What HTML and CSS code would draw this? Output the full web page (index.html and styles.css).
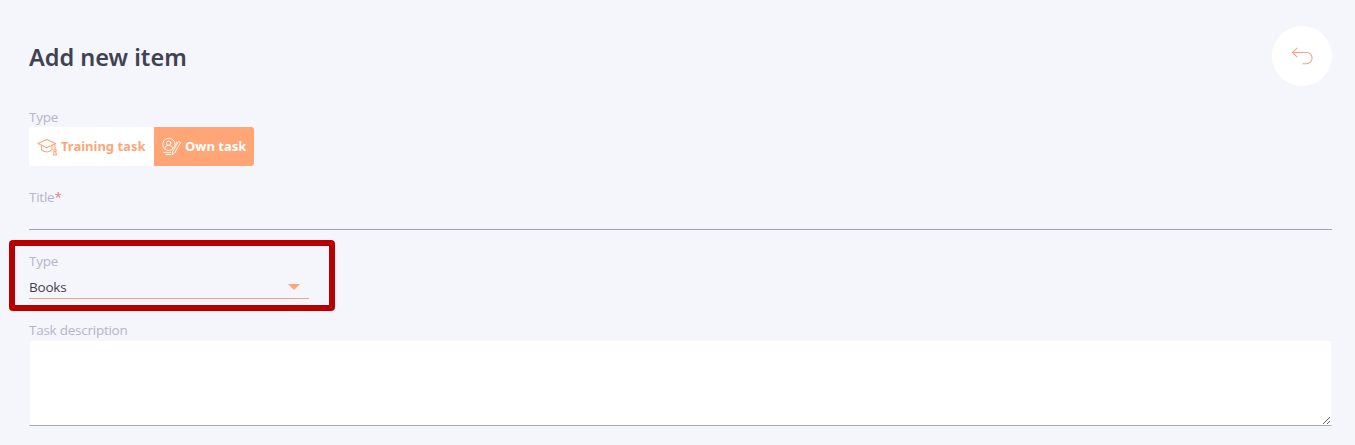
FILE: index.html
```
<!DOCTYPE html>
<html lang="en">
<head>
    <meta charset="UTF-8">
    <meta name="viewport" content="width=device-width, initial-scale=1.0">
    <title>Add new item</title>
    <link rel="stylesheet" href="styles.css">
</head>
<body>
    <div class="container">
        <header class="page-header">
            <h1>Add new item</h1>
            <button type="button" class="back-button" aria-label="Back">
                <svg width="22" height="18" viewBox="0 0 22 18" fill="none" stroke="currentColor" stroke-width="1.1">
                    <path d="M6.200 .8 1.500 5.500l4.700 4.700M1.500 5.500h14a5.600 5.600 0 0 1 0 11.200H11.500"/>
                </svg>
            </button>
        </header>

        <div class="type-group">
            <span class="label">Type</span>
            <div class="type-buttons">
                <button type="button" class="type-button training">
                    <svg width="21" height="19" viewBox="0 0 21 19" fill="none" stroke="currentColor" stroke-width="1.1" stroke-linejoin="round">
                        <path d="M1 6.500 9.800 2.500l8.700 4-8.700 4.200z"/>
                        <path d="M4.500 8.300v4.400c2.500 3 8 3 10.500 0V8.300M18 6.500v6"/>
                        <circle cx="18" cy="13.400" r="1.200"/>
                        <path d="m17.300 14.400-.8 3.600h3l-.8-3.600"/>
                    </svg>
                    <span>Training task</span>
                </button>
                <button type="button" class="type-button own active">
                    <svg width="21" height="19" viewBox="0 0 21 19" fill="none" stroke="currentColor" stroke-width=".9" stroke-linejoin="round" stroke-linecap="round">
                        <path d="M10.500 13a6.200 6.200 0 1 1 3.600-5.500"/>
                        <circle cx="7.700" cy="6.200" r="2.200"/>
                        <path d="M4 12v-1c0-3.500 7.400-3.500 7.400 0v1"/>
                        <path d="m18 4.500 1.700 1L13.500 16l-2.500 2 .5-3z"/>
                        <path d="m15.700 5.300-4 7M2.500 15.400h7M5 17.500h4.500"/>
                    </svg>
                    <span>Own task</span>
                </button>
            </div>
        </div>

        <div class="title-group">
            <label class="label" for="title">Title<span class="required">*</span></label>
            <input type="text" id="title" class="title-input">
        </div>

        <div class="select-group">
            <span class="label">Type</span>
            <div class="select">
                <span>Books</span>
                <svg width="12" height="6" viewBox="0 0 12 6" fill="currentColor"><path d="M0 0h12L6 6z"/></svg>
            </div>
        </div>

        <div class="description-group">
            <label class="label" for="description">Task description</label>
            <textarea id="description" class="description"></textarea>
        </div>
    </div>
</body>
</html>
```
FILE: styles.css
```
* {
    box-sizing: border-box;
}
body {
    margin: 0;
    font-family: "Segoe UI", "Open Sans", "Noto Sans", sans-serif;
    font-size: 14px;
    background-color: #f4f6fb;
    color: #3f4254;
}
.container {
    padding: 26px 23px 0 29px;
}
.page-header {
    display: flex;
    justify-content: space-between;
    align-items: flex-start;
    height: 82px;
}
h1 {
    margin: 15px 0 0;
    font-family: "Segoe UI", "Noto Sans", sans-serif;
    font-size: 23.5px;
    line-height: 32px;
    font-weight: 600;
}
.back-button {
    display: flex;
    align-items: center;
    justify-content: center;
    width: 60px;
    height: 60px;
    padding: 0;
    border: none;
    border-radius: 50%;
    background-color: #ffffff;
    color: #f0a584;
}
.label {
    display: block;
    font-size: 13.5px;
    line-height: 19px;
    letter-spacing: -0.25px;
    color: #b5b5c9;
}
.type-group {
    height: 80px;
}
.type-buttons {
    display: flex;
}
.type-button {
    display: flex;
    align-items: center;
    gap: 3px;
    height: 39px;
    padding: 0 0 0 8px;
    border: none;
    font-family: "Noto Sans", sans-serif;
    font-size: 13px;
    font-weight: 700;
    white-space: nowrap;
    background-color: #ffffff;
    color: #fba77b;
}
.type-button span {
    padding-bottom: 2px;
}
.training {
    width: 125px;
    border-radius: 3px 0 0 3px;
}
.own {
    width: 100px;
    border-radius: 0 3px 3px 0;
}
.type-button.active {
    padding-left: 7px;
    background-color: #ffa576;
    color: #ffffff;
}
.type-button svg {
    flex: none;
}
.title-group {
    height: 52px;
}
.required {
    color: #f4777b;
}
.title-input {
    display: block;
    width: 100%;
    height: 23px;
    padding: 0;
    border: none;
    border-bottom: 1px solid #a5a5b8;
    background: transparent;
}
.select-group {
    width: 326px;
    height: 71px;
    margin-left: -20px;
    padding: 6px 20px 0 14px;
    border: 6px solid #b90000;
    border-radius: 4px;
}
.select {
    display: flex;
    align-items: center;
    justify-content: space-between;
    width: 280px;
    height: 28px;
    padding: 5px 9px 0 0;
    border-bottom: 1px solid #f0a584;
    font-size: 13.5px;
    letter-spacing: -0.2px;
}
.select svg {
    color: #ffa576;
}
.description-group {
    margin-top: 10px;
}
.description {
    display: block;
    width: 100%;
    height: 86px;
    padding: 4px;
    border: 1px solid #f4f6fb;
    border-bottom-color: #a9a9b0;
    outline: none;
    resize: vertical;
    background-color: #ffffff;
}
```
